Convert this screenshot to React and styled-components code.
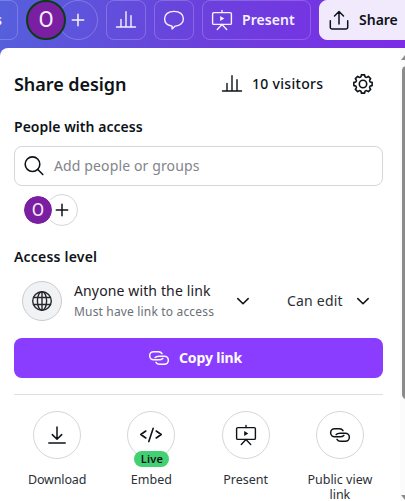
import React from "react";
import styled, { createGlobalStyle } from "styled-components";

const Global = createGlobalStyle`
  * { box-sizing: border-box; }
  body {
    margin: 0;
    overflow: hidden;
    font-family: "Noto Sans", "Open Sans", sans-serif;
    color: #0e1318;
    background: #fff;
  }
`;

const Screen = styled.div`
  width: 405px;
  height: 501px;
  overflow: hidden;
  display: flex;
  flex-direction: column;
  background: linear-gradient(100deg, #5560dc 0, #6a42dc 190px, #7d2ae7 420px) 0 0 / 405px 60px no-repeat;
`;

const Header = styled.header`
  display: flex;
  flex: none;
  width: 430px;
  height: 48px;
`;

const HeaderButton = styled.button`
  display: flex;
  flex: none;
  align-items: center;
  justify-content: ${(p) => (p.$wide ? "flex-start" : "center")};
  gap: 8px;
  width: ${(p) => p.$w || 40}px;
  height: 40px;
  margin: 0 8px 0 0;
  padding: 0 0 0 ${(p) => p.$pad || 0}px;
  border: 1px solid ${(p) => (p.$light ? "#f1eafd" : "rgba(255,255,255,.2)")};
  border-radius: 8px;
  background: ${(p) => (p.$light ? "#f1eafd" : "transparent")};
  color: ${(p) => (p.$light ? "#0e1318" : "#f5f2ff")};
  font: 600 14px/20px "Noto Sans", sans-serif;
`;

const CutButton = styled(HeaderButton)`
  width: 38px;
  margin-left: -20px;
  justify-content: flex-end;
  padding-right: 15px;
`;

const Avatar = styled.span`
  display: flex;
  flex: none;
  align-items: center;
  justify-content: center;
  z-index: 1;
  width: ${(p) => p.$size}px;
  height: ${(p) => p.$size}px;
  border: 2px solid ${(p) => p.$ring};
  border-radius: 50%;
  background: #7b1fa2;
  background-clip: ${(p) => (p.$size > 35 ? "border-box" : "padding-box")};
  color: #f6eefa;
  font: 400 ${(p) => p.$font}px/1 Roboto, sans-serif;
`;

const PlusCircle = styled.button`
  display: flex;
  flex: none;
  align-items: center;
  justify-content: center;
  width: ${(p) => p.$size}px;
  height: ${(p) => p.$size}px;
  margin: 0 8px 0 -8px;
  padding: 0;
  border: 1px solid ${(p) => p.$line};
  border-radius: 50%;
  background: transparent;
  color: ${(p) => p.$ink};
`;

const Body = styled.div`
  display: flex;
  height: 453px;
  background: #fff;
  border-radius: 8px 0 0 0;
`;

const Panel = styled.main`
  width: 400px;
  padding: 0 17px 0 14px;
`;

const Rail = styled.div`
  display: flex;
  flex-direction: column;
  width: 5px;
  padding: 7px 0 0 1px;
  background: #fbfbfb;
  svg { display: block; flex: none; }
`;

const Thumb = styled.div`
  height: 333px;
  margin: 6px -6px 96px 1px;
  flex: none;
  border-radius: 5px;
  background: #8b8b8b;
`;

const TitleRow = styled.div`
  display: flex;
  align-items: center;
  height: 70px;
  padding: 2px 8px 0 0;
`;

const Title = styled.h1`
  flex: 1;
  margin: 0;
  font-size: 18px;
  line-height: 24px;
  font-weight: 600;
  letter-spacing: -0.06px;
`;

const Visitors = styled.div`
  display: flex;
  align-items: center;
  gap: 8px;
  width: 131px;
  font-size: 14px;
  font-weight: 500;
  white-space: nowrap;
`;

const Label = styled.h2`
  margin: ${(p) => p.$top || 0}px 0 0;
  font-size: 14px;
  line-height: 18px;
  font-weight: 600;
  letter-spacing: ${(p) => p.$ls}px;
`;

const SearchBox = styled.div`
  display: flex;
  align-items: center;
  gap: 8px;
  height: 40px;
  margin-top: 10px;
  padding-left: 7px;
  border: 1px solid #d5d6dc;
  border-radius: 8px;
  color: #0e1318;
`;

const Copy = styled.span`
  display: block;
  color: ${(p) => p.$color || "inherit"};
  font-size: ${(p) => p.$size || 14}px;
  line-height: ${(p) => p.$lh || 20}px;
  letter-spacing: ${(p) => p.$ls || 0}px;
  white-space: nowrap;
`;

const People = styled.div`
  display: flex;
  height: 32px;
  margin: 8px 0 0 8px;
`;

const AccessRow = styled.div`
  display: flex;
  align-items: center;
  height: 40px;
  margin: 15px 0 0 8px;
`;

const GlobeCircle = styled.span`
  display: flex;
  align-items: center;
  justify-content: center;
  width: 40px;
  height: 40px;
  border: 1px solid #c9cbd1;
  border-radius: 50%;
  background: #f1f2f4;
  color: #24292e;
`;

const AccessText = styled.div`
  width: 157px;
  margin-left: 12px;
`;

const Permission = styled.div`
  width: 64px;
  margin-left: 32px;
`;

const CopyButton = styled.button`
  display: flex;
  align-items: center;
  justify-content: center;
  gap: 8px;
  width: 100%;
  height: 40px;
  margin: 17px 0 16px;
  padding: 0 8px 0 0;
  border: 0;
  border-radius: 8px;
  background: #8b3dff;
  color: #fff;
  font: 700 14px/20px "Noto Sans", sans-serif;
  letter-spacing: -0.1px;
`;

const Divider = styled.div`
  height: 1px;
  background: #dddfe4;
`;

const Actions = styled.div`
  display: grid;
  grid-template-columns: repeat(4, 94.25px);
  margin: 16px -4px 0;
`;

const Action = styled.div`
  display: flex;
  flex-direction: column;
  align-items: center;
  color: #2b3036;
  font-size: 12.5px;
  line-height: 15px;
  text-align: center;
  letter-spacing: ${(p) => p.$ls || 0}px;
`;

const ActionCircle = styled.span`
  position: relative;
  display: flex;
  align-items: center;
  justify-content: center;
  width: 48px;
  height: 48px;
  margin-bottom: 13px;
  border: 1px solid #d5d6dc;
  border-radius: 50%;
  color: #0e1318;
`;

const Badge = styled.span`
  position: absolute;
  left: 6px;
  top: 39px;
  width: 35px;
  height: 16px;
  border-radius: 8px;
  background: #43d073;
  color: #0e1318;
  font-size: 11px;
  line-height: 16px;
  font-weight: 600;
  letter-spacing: 0.2px;
`;

const Svg = styled.svg`
  display: block;
  flex: none;
  width: 24px;
  height: 24px;
  fill: none;
  stroke: currentColor;
  stroke-width: ${(p) => p.$sw || 1.5};
  stroke-linecap: round;
  stroke-linejoin: round;
`;

const Icon = ({ children, ...rest }) => <Svg viewBox="0 0 24 24" {...rest}>{children}</Svg>;

const Plus = () => <Icon><path d="M12 6.3v11.4M6.3 12h11.4" /></Icon>;
const Chart = () => (
  <Icon $sw={1.4}><path d="M2.5 19h19M7 18.5v-7M12 18.5V3.7M17 18.5V7.6" /></Icon>
);
const Chat = () => (
  <Icon $sw={1.4}>
    <path d="M13.2 18.1c4.6-.3 8.2-2.9 8.2-7.3 0-4.6-3.7-7.4-9.4-7.4s-9.4 2.8-9.4 7.4c0 3.7 2.4 6.2 6.2 7l1.3.3v2.8z" />
  </Icon>
);
const Board = () => (
  <Icon $sw={1.4}>
    <rect x="2.6" y="4.6" width="18.8" height="11.8" rx="1.2" />
    <path d="M12 2.5v2M12 16.6l-4.7 4.8M12 16.6l4.7 4.8" />
    <path d="M10.2 8l4.1 2.5-4.1 2.5z" fill="currentColor" stroke="none" />
  </Icon>
);
const Upload = () => (
  <Icon><path d="M3.3 12.7v6.5a1.8 1.8 0 0 0 1.8 1.8h13.8a1.8 1.8 0 0 0 1.8-1.8v-6.5M12 16V3.5M7.5 8 12 3.5 16.5 8" /></Icon>
);
const teeth = Array.from({ length: 8 }, (_, i) => {
  const at = (r, deg) => {
    const a = ((i * 45 + deg - 90) * Math.PI) / 180;
    return `${(12 + r * Math.cos(a)).toFixed(2)} ${(12 + r * Math.sin(a)).toFixed(2)}`;
  };
  return `${i ? "L" : "M"}${at(9.3, -10)}L${at(9.3, 10)}C${at(7.9, 13)} ${at(7, 18)} ${at(7.4, 22.5)}C${at(7, 27)} ${at(7.9, 32)} ${at(9.3, 35)}`;
}).join("");
const Gear = () => <Icon $sw={1.6}><path d={teeth + "z"} /><circle cx="12" cy="12" r="3.7" /></Icon>;
const Search = () => <Icon $sw={1.6}><circle cx="10.5" cy="10.2" r="7.3" /><path d="m15.8 15.5 5 5" /></Icon>;
const Globe = () => (
  <Icon $sw={1.4}>
    <circle cx="12" cy="12" r="9.3" />
    <ellipse cx="12" cy="12" rx="4.6" ry="9.3" />
    <path d="M12 2.7v18.6M3.7 8.5h16.6M3.7 15.5h16.6" />
  </Icon>
);
const Chevron = () => <Icon><path d="m6.8 9.6 5.2 5.1 5.2-5.1" /></Icon>;
const Chain = () => (
  <Icon>
    <path d="M15 7.6C14.3 6.3 13 5.7 11.4 5.7H6.7a4.05 4.05 0 0 0 0 8.1H12c1.7 0 3-.5 3.8-1.4" />
    <path d="M9 16.4c.7 1.3 2 1.9 3.6 1.9h4.7a4.05 4.05 0 0 0 0-8.1H12c-1.7 0-3 .5-3.8 1.4" />
  </Icon>
);
const Download = () => <Icon><path d="M12 4v12M7.3 11.6 12 16.3l4.7-4.7M3.8 20h16.4" /></Icon>;
const Code = () => <Icon $sw={1.6}><path d="M6.8 8 1.8 11.5l5 3.5M17.2 8l5 3.5-5 3.5M14.2 5.2 9.8 18.6" /></Icon>;

export default function App() {
  return (
    <>
      <Global />
      <Screen>
        <Header>
          <CutButton>s</CutButton>
          <Avatar $size={40} $font={22} $ring="#0b3d12">O</Avatar>
          <PlusCircle $size={40} $line="rgba(255,255,255,.22)" $ink="#f5f2ff"><Plus /></PlusCircle>
          <HeaderButton><Chart /></HeaderButton>
          <HeaderButton><Chat /></HeaderButton>
          <HeaderButton $wide $w={109} $pad={7}><Board /><Copy $ls={0.05}>Present</Copy></HeaderButton>
          <HeaderButton $wide $light $w={100} $pad={7}><Upload /><Copy>Share</Copy></HeaderButton>
        </Header>
        <Body>
          <Panel>
            <TitleRow>
              <Title>Share design</Title>
              <Visitors><Chart /><Copy $ls={0.3}>10 visitors</Copy></Visitors>
              <Gear />
            </TitleRow>
            <Label $ls={0.03}>People with access</Label>
            <SearchBox><Search /><Copy $color="#82858a" $ls={0.13}>Add people or groups</Copy></SearchBox>
            <People>
              <Avatar $size={32} $font={18} $ring="#fff">O</Avatar>
              <PlusCircle $size={32} $line="#d5d6dc" $ink="#0e1318"><Plus /></PlusCircle>
            </People>
            <Label $top={22} $ls={0.2}>Access level</Label>
            <AccessRow>
              <GlobeCircle><Globe /></GlobeCircle>
              <AccessText>
                <Copy $color="#1b2025" $ls={0.13}>Anyone with the link</Copy>
                <Copy $size={12} $lh={21} $color="#6b6f76" $ls={0.17}>Must have link to access</Copy>
              </AccessText>
              <Chevron />
              <Permission><Copy $color="#2b3036" $ls={0.2}>Can edit</Copy></Permission>
              <Chevron />
            </AccessRow>
            <CopyButton><Chain />Copy link</CopyButton>
            <Divider />
            <Actions>
              <Action $ls={-0.15}><ActionCircle><Download /></ActionCircle>Download</Action>
              <Action><ActionCircle><Code /><Badge>Live</Badge></ActionCircle>Embed</Action>
              <Action><ActionCircle><Board /></ActionCircle>Present</Action>
              <Action><ActionCircle><Chain /></ActionCircle>Public view<br />link</Action>
            </Actions>
          </Panel>
          <Rail>
            <svg width="4" height="5" viewBox="0 0 4 5"><path d="M0 5 4 0v5z" fill="#8b8b8b" /></svg>
            <Thumb />
            <svg width="4" height="5" viewBox="0 0 4 5"><path d="M0 0h4v5z" fill="#8b8b8b" /></svg>
          </Rail>
        </Body>
      </Screen>
    </>
  );
}
